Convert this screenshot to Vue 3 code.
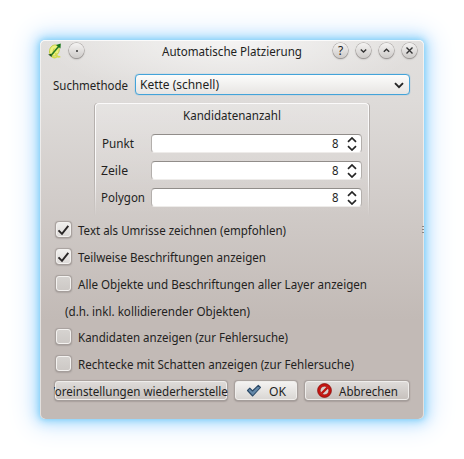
<script setup>
import { h, reactive } from 'vue'

// Label whose glyphs are fitted to a given width
const FitText = (props) =>
  h('svg', { width: props.w, height: 20, style: { display: 'block', overflow: 'visible', flex: 'none' } }, [
    h('text', { x: 0, y: 15, textLength: props.w, lengthAdjust: 'spacingAndGlyphs', fill: '#231f1e' }, props.text),
  ])
FitText.props = ['text', 'w']

const controls = [
  { name: 'help' },
  { name: 'min', d: 'M4.8 6.4 L7.5 9 L10.2 6.4' },
  { name: 'max', d: 'M4.8 8.8 L7.5 6.2 L10.2 8.8' },
  { name: 'close', d: 'M4.5 4.5 L10.5 10.5 M10.5 4.5 L4.5 10.5' },
]
const spins = [
  { text: 'Punkt', w: 32, x: 7 },
  { text: 'Zeile', w: 27, x: 6 },
  { text: 'Polygon', w: 44, x: 6 },
]
const checks = reactive([
  { text: 'Text als Umrisse zeichnen (empfohlen)', w: 208, on: true },
  { text: 'Teilweise Beschriftungen anzeigen', w: 188, on: true },
  { text: 'Alle Objekte und Beschriftungen aller Layer anzeigen', w: 289, on: false },
  { note: '(d.h. inkl. kollidierender Objekten)', w: 185 },
  { text: 'Kandidaten anzeigen (zur Fehlersuche)', w: 210, on: false },
  { text: 'Rechtecke mit Schatten anzeigen (zur Fehlersuche)', w: 276, on: false },
])
</script>

<template>
  <main class="desktop">
    <section class="window">
      <header class="titlebar">
        <svg class="logo" width="14" height="16" viewBox="0 0 14 16">
          <path d="M8 2C3.800 1.500 1.200 5.500 1.500 9c.2 4 4.500 5 7 3C12 9.500 12.500 3.500 8 2Z" fill="#eef27e" stroke="#c3cf45" stroke-width="1" />
          <path d="M6.500 5.500C4.800 7 4.800 9.500 6 10.500" fill="none" stroke="#c9d44c" stroke-width="1.200" />
          <path d="M7.500 10c.8 3 2.500 4.500 4.800 3.500M3.500 12.500c1.500 2.500 4 2.800 5.500 1" fill="none" stroke="#d3dc4e" stroke-width="1.800" />
          <path d="M3 12.500 11 3" stroke="#267a25" stroke-width="1.600" />
          <path d="M8 2 12.800.5 12.500 5.500Z" fill="#147517" />
          <path d="M.2 11.500 3.200 10.800 3.800 14.200Z" fill="#24541f" />
        </svg>
        <span class="round"><i class="dot"></i></span>
        <div class="title"><FitText text="Automatische Platzierung" :w="140" /></div>
        <div class="controls">
          <span v-for="c in controls" :key="c.name" class="round">
            <b v-if="c.name === 'help'">?</b>
            <svg v-else width="15" height="15"><path :d="c.d" fill="none" stroke="#333" stroke-width="1.4" /></svg>
          </span>
        </div>
      </header>

      <div class="method">
        <FitText text="Suchmethode" :w="75" />
        <div class="combo">
          <FitText class="value" text="Kette (schnell)" :w="79" />
          <svg class="arrow" width="10" height="7"><path d="M1 1.200 5 5.200 9 1.200" fill="none" stroke="#252525" stroke-width="1.900" /></svg>
        </div>
      </div>

      <div class="group">
        <div class="caption"><FitText text="Kandidatenanzahl" :w="98" /></div>
        <div v-for="s in spins" :key="s.text" class="spinrow">
          <div class="spinlabel" :style="{ paddingLeft: s.x + 'px' }"><FitText :text="s.text" :w="s.w" /></div>
          <div class="spin">
            <FitText class="value" text="8" :w="6.5" />
            <svg width="10" height="14"><path d="M1 4.900 5 1 9 4.900M1 9.100 5 13 9 9.100" fill="none" stroke="#252525" stroke-width="1.700" /></svg>
          </div>
        </div>
      </div>

      <div class="checks">
        <template v-for="c in checks" :key="c.text || c.note">
          <div v-if="c.note" class="note"><FitText :text="c.note" :w="c.w" /></div>
          <div v-else class="check" @click="c.on = !c.on">
            <span class="box" :class="{ on: c.on }">
              <svg v-if="c.on" width="13" height="12"><path d="M1.500 6.300 5 9.800 11.300 1.800" fill="none" stroke="#292626" stroke-width="1.900" /></svg>
            </span>
            <FitText :text="c.text" :w="c.w" />
          </div>
        </template>
      </div>

      <footer class="buttons">
        <button class="btn reset"><FitText text="Voreinstellungen wiederherstellen" :w="187" /></button>
        <button class="btn ok">
          <svg width="16" height="14" viewBox="0 0 16 14"><path d="M1.500 6.500 3.800 4.200 6.500 7 12.300 1.300 14.500 3.500 6.700 12Z" fill="#6488a9" stroke="#294866" stroke-width="1.100" stroke-linejoin="round" /></svg>
          <FitText text="OK" :w="17" />
        </button>
        <button class="btn cancel">
          <svg width="15" height="15" viewBox="0 0 15 15">
            <circle cx="7.500" cy="7.500" r="6.900" fill="#c91410" stroke="#86100d" stroke-width=".8" />
            <circle cx="7.500" cy="7.500" r="4.300" fill="#d8cfcc" stroke="#8c1410" stroke-width=".6" />
            <path d="M4.500 10.500 10.500 4.500" stroke="#c01410" stroke-width="2.400" />
          </svg>
          <FitText text="Abbrechen" :w="59" />
        </button>
      </footer>
      <i class="grip"></i>
    </section>
  </main>
</template>

<style>
body { margin: 0; background: #fff; overflow: hidden; }
</style>

<style scoped>
.desktop { box-sizing: border-box; width: 464px; height: 459px; padding: 40px; font: 13px "Noto Sans", sans-serif; }
.window {
  position: relative; box-sizing: border-box; width: 384px; height: 379px;
  border-radius: 5px;
  background:
    radial-gradient(ellipse 190px 60px at 50% 0, rgba(255,255,255,.65), rgba(255,255,255,0)),
    linear-gradient(#e2e0de 0, #dedbd9 60px, #c2bab6 280px, #c2bab6);
  box-shadow: inset 0 1px rgba(255,255,255,.8), inset 1px 0 rgba(255,255,255,.55), inset -1px 0 rgba(255,255,255,.55),
    0 0 6px 0 #73caf8, 0 0 13px 3px #a5dcfb, 0 0 26px 9px #deedff;
}
.titlebar { display: flex; height: 34px; padding: 0 7px 0 8px; }
.logo { margin: 3px 7px 0 0; }
.round {
  display: flex; align-items: center; justify-content: center; box-sizing: border-box;
  flex: none; width: 15px; height: 15px; margin-top: 3px; border-radius: 50%;
  background: linear-gradient(#f4f3f2, #cecbc9); box-shadow: 0 0 0 .6px #a5a09e, 0 1px 1.500px #7f7b79;
}
.round b { font: 12px/15px "Noto Sans", sans-serif; color: #222; }
.dot { width: 2px; height: 2px; border-radius: 1px; background: #333; }
.title { flex: 1; padding: 1px 0 0 78px; }
.controls { display: flex; gap: 8px; }
.method { display: flex; align-items: flex-start; height: 29px; padding-left: 13px; gap: 7px; }
.method > svg { margin-top: 1px; }
.combo {
  display: flex; align-items: center; justify-content: space-between; box-sizing: border-box;
  width: 275px; height: 21px; padding: 0 5px 0 4px;
  border: 1.500px solid #43a3d9; border-radius: 4px;
  background: linear-gradient(#fcfcfb, #e7e5e3); box-shadow: 0 0 1px #43a3d9;
}
.value { margin-bottom: 2px; }
.arrow { margin-top: 2px; }
.group {
  position: relative; box-sizing: border-box; width: 274px; height: 113px; margin-left: 55px; padding-top: 1px;
  border-radius: 4px; background: linear-gradient(rgba(255,255,255,.25), rgba(255,255,255,0));
}
.group::before {
  content: ""; position: absolute; inset: 0; border: 1px solid #fbfafa; border-bottom: 0; border-radius: 4px 4px 0 0;
  box-shadow: -1px 0 #b5b0ad, 1px 0 #b5b0ad, 0 -1px #c5c0bd;
  -webkit-mask: linear-gradient(#000 65%, transparent); -webkit-mask-clip: no-clip; mask-clip: no-clip; pointer-events: none;
}
.caption { height: 29px; padding: 1px 0 0 88px; box-sizing: border-box; }
.spinrow { display: flex; height: 27px; }
.spinlabel { box-sizing: border-box; width: 56px; }
.spin {
  display: flex; align-items: center; justify-content: flex-end; gap: 9px; box-sizing: border-box;
  width: 211px; height: 19px; margin-top: 1px; padding-right: 4px; border: 1px solid #b3afac; border-top-color: #918d8a;
  border-bottom-color: #eeecea; border-radius: 4px; background: #fff;
}
.checks { display: flex; flex-direction: column; height: 160px; padding: 4px 0 0 15px; }
.check { display: flex; flex: none; height: 27px; gap: 6px; }
.note { flex: none; height: 26px; padding-left: 10px; }
.box {
  display: flex; align-items: center; justify-content: center; box-sizing: border-box; flex: none;
  width: 15px; height: 15px; margin: 2px 1px; border: 1px solid #f4f2f0; border-radius: 3px;
  background: linear-gradient(#d6d3d0, #cdc9c6); box-shadow: 0 0 1px .5px #a8a19e, 0 1px 2px #79736f;
}
.box.on { background: linear-gradient(#f0efed, #dedbd9); }
.buttons { display: flex; gap: 8px; padding: 1px 0 0 15px; }
.btn {
  display: flex; align-items: center; justify-content: center; box-sizing: border-box; height: 19px; padding: 0;
  border: 1px solid #efedeb; border-radius: 3px; background: linear-gradient(#dedbd9, #c7c1bd);
  box-shadow: 0 0 1px .5px #a8a19e, 0 1px 2px #6f6864; font: inherit;
}
.reset { width: 172px; overflow: clip; overflow-clip-margin: 2px; }
.ok { width: 62px; gap: 7px; background: linear-gradient(#f3f2f1, #dad7d4); }
.cancel { width: 104px; gap: 7px; }
.grip { position: absolute; right: 0; top: 186px; width: 2px; height: 7px; background: repeating-linear-gradient(#8b8582 0 1px, transparent 1px 3px); }
</style>
